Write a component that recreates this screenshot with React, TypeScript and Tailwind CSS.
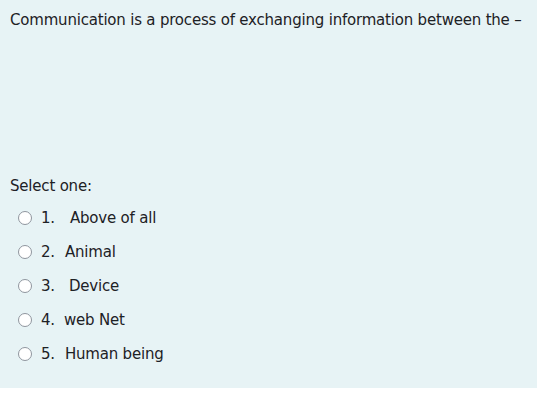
import React from "react";

const OPTIONS = [
  { n: "1.", label: "Above of all", gap: "ml-[15px]" },
  { n: "2.", label: "Animal", gap: "ml-[10px]" },
  { n: "3.", label: "Device", gap: "ml-[14px]" },
  { n: "4.", label: "web Net", gap: "ml-[9px]" },
  { n: "5.", label: "Human being", gap: "ml-[10px]" },
];

export default function App() {
  return (
    <div className="w-[537px] h-[411px] bg-white font-['DejaVu_Sans',sans-serif] text-[#1d2125]">
      <div className="h-[388px] bg-[#e7f3f5] px-[10px] pt-[11px]">
        <p className="text-[15px] leading-[19px] tracking-[-0.2px]">
          Communication is a process of exchanging information between the –
        </p>

        <p className="mt-[147px] text-[15px] leading-[19px] tracking-[-0.2px]">Select one:</p>

        <ul className="mt-[5px] pl-[8px]">
          {OPTIONS.map((o) => (
            <li key={o.n} className="h-[34px] flex items-center text-[15px] tracking-[-0.2px]">
              <span className="w-[14px] h-[14px] rounded-full border border-[#8f959e] bg-white shrink-0" />
              <span className="ml-[9px]">{o.n}</span>
              <span className={o.gap}>{o.label}</span>
            </li>
          ))}
        </ul>
      </div>
    </div>
  );
}
